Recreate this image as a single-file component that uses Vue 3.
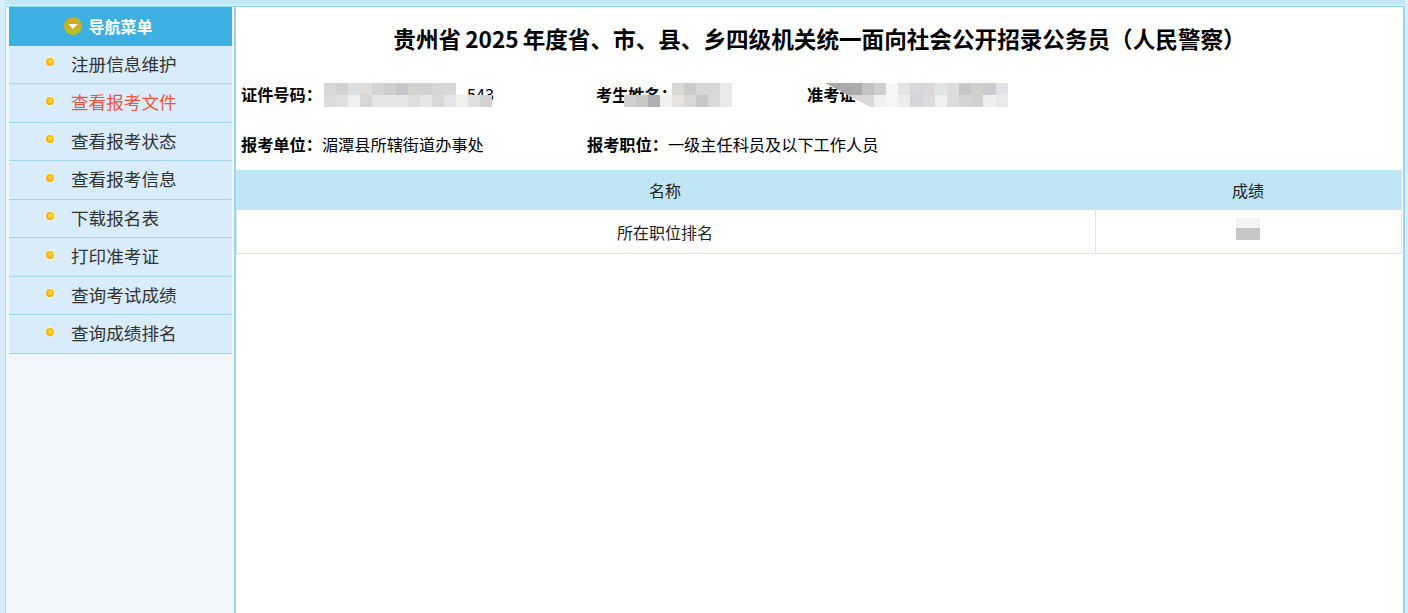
<script setup>
const menu = [
  { label: '注册信息维护' },
  { label: '查看报考文件', active: true },
  { label: '查看报考状态' },
  { label: '查看报考信息' },
  { label: '下载报名表' },
  { label: '打印准考证' },
  { label: '查询考试成绩' },
  { label: '查询成绩排名' }
]
const T = 'transparent'
const mosaics = [
  {
    left: 88, cols: 14, size: 12, cls: 'm1',
    cells: ['#d8d8d8','#d3d1d1','#dcdfe1','#e0dcd9','#d3d3d3','#cfcfd0','#c4c6c9','#d4d2cf','#d2d2d2','#d8d6d2','#d6d8dc',T,T,T,
            '#dcdcdc','#e0e0e0','#eef0ef','#d9d7d4','#e6e6e6','#e6e6e6','#e4e6e8','#e0dedb','#e8e6e4','#dad8d5','#e4e5e8','#efefec','#e0e0e0','#d2d2d2']
  },
  {
    left: 388, cols: 9, size: 12, cls: 'm2',
    cells: [T,T,T,T,'#d8d8d6','#cbcbcb','#d8d8d6','#d8d8d6','#e8e9eb',
            '#cfcfcf','#c9c6c3','#aeb0b4','#f0f0f0','#e6e2df','#d8d8d8','#c8c6ca','#d8dad8','#e8e9eb']
  },
  {
    left: 589, cols: 15, size: 12.2, cls: 'm3',
    cells: ['#a9a9a9','#a9a9a9','#acacac','#c4c4c4','#cfcfcf','#f5f6f7','#e6e2e0','#d5d8dc','#dcd8d8','#dfe4e6','#dcdcdc','#c6c6c8','#d0cfcb','#cbccd2','#e2e2e6',
            '#b8b8b8','#c8c8c8','#d8d8d8','#d8d8d8','#eef0f2','#f5f5f5','#eeecec','#d3d5d8','#dcdcde','#edf0ef','#dcdcdc','#d4d4d4','#d0d0d4','#eeeeee','#e8e8e8']
  }
]
</script>

<template>
  <div class="page">
    <div class="band"></div>
    <div class="frame">
      <aside class="side">
        <div class="side-head">
          <svg class="head-icon" width="18" height="18" viewBox="0 0 18 18">
            <defs>
              <linearGradient id="hg" x1="0" y1="0" x2="0" y2="1">
                <stop offset="0" stop-color="#d0a628" />
                <stop offset="1" stop-color="#bcc01e" />
              </linearGradient>
            </defs>
            <circle cx="9" cy="9" r="9" fill="url(#hg)" />
            <path d="M4.5 7h9L9 12z" fill="#fff" />
          </svg>
          <span>导航菜单</span>
        </div>
        <ul class="menu">
          <li v-for="item in menu" :key="item.label" class="menu-item" :class="{ active: item.active }">
            <i class="dot"></i>
            <span>{{ item.label }}</span>
          </li>
        </ul>
      </aside>
      <main class="main">
        <h1 class="title">贵州省 2025 年度省、市、县、乡四级机关统一面向社会公开招录公务员（人民警察）</h1>
        <div class="info info-a">
          <div class="field f1"><b>证件号码：</b><span class="tail">543</span></div>
          <div class="field f2"><b>考生姓名：</b></div>
          <div class="field"><b>准考证号：</b></div>
          <div
            v-for="(m, i) in mosaics"
            :key="i"
            class="mosaic"
            :class="m.cls"
            :style="{ left: m.left + 'px', gridTemplateColumns: 'repeat(' + m.cols + ', ' + m.size + 'px)' }"
          >
            <span v-for="(c, j) in m.cells" :key="j" :style="{ background: c }"></span>
          </div>
        </div>
        <div class="info info-b">
          <div class="field f3"><b>报考单位：</b>湄潭县所辖街道办事处</div>
          <div class="field"><b>报考职位：</b>一级主任科员及以下工作人员</div>
        </div>
        <div class="table">
          <div class="row head">
            <div class="c1">名称</div>
            <div class="c2">成绩</div>
          </div>
          <div class="row body">
            <div class="c1">所在职位排名</div>
            <div class="c2"><span class="score"></span></div>
          </div>
        </div>
      </main>
    </div>
  </div>
</template>

<style>
html, body { margin: 0; background: #d9eefc; overflow: hidden; }
</style>

<style scoped>
.page {
  height: 613px;
  padding: 0 3px 0 5px;
  box-sizing: border-box;
  display: flex;
  flex-direction: column;
  background: #d9eefc;
  font-family: "Noto Sans CJK SC", "Liberation Sans", sans-serif;
  color: #111;
}
.band {
  height: 5px;
  flex: none;
  background: #c3e7f7;
  border-bottom: 1px solid #e6f5fc;
}
.frame {
  flex: 1;
  display: flex;
  min-height: 0;
  border-top: 1px solid #8fd3f0;
  border-left: 1px solid #a6d9f0;
}
.side {
  width: 230px;
  flex: none;
  box-sizing: border-box;
  padding: 0 2px 0 3px;
  background: #eff7fb;
  border-right: 2px solid #9dd5ee;
}
.side-head {
  height: 38.5px;
  display: flex;
  align-items: center;
  justify-content: center;
  gap: 6px;
  padding-right: 24px;
  background: #3eafe2;
  color: #fff;
  font-size: 16px;
  font-weight: 700;
  line-height: 1;
}
.head-icon { flex: none; }
.menu {
  list-style: none;
  margin: 0;
  padding: 0;
}
.menu-item {
  height: 38.5px;
  box-sizing: border-box;
  display: flex;
  align-items: center;
  padding: 0 0 1px 37px;
  gap: 17px;
  background: #d8ecfb;
  border-bottom: 1px solid #a3d6ee;
  color: #333;
  font-size: 17.6px;
  line-height: 1;
}
.menu-item.active { color: #f2533b; }
.dot {
  width: 8px;
  height: 8px;
  flex: none;
  border-radius: 50%;
  margin-top: -3px;
  background: radial-gradient(circle at 55% 45%, #ffe24a 0, #fdb90c 50%, #e08c00 100%);
  box-shadow: 0 0 1px 1px #fff6e0;
}
.main {
  flex: 1;
  min-width: 0;
  background: #fff;
  border-right: 2px solid #9dd5ee;
}
.title {
  margin: 0;
  height: 62px;
  line-height: 64px;
  text-align: center;
  font-size: 22.6px;
  font-weight: 700;
  word-spacing: -1px;
  color: #000;
  white-space: nowrap;
}
.info {
  display: flex;
  padding-left: 5px;
  font-size: 16.2px;
  color: #000;
  white-space: nowrap;
}
.info b { font-weight: 700; }
.info-a {
  position: relative;
  height: 50px;
  line-height: 50px;
}
.info-b {
  height: 51px;
  line-height: 50px;
}
.f1 { width: 355px; }
.f2 { width: 211px; }
.f3 { width: 346px; }
.tail { margin-left: 145px; }
.mosaic {
  position: absolute;
  top: 14px;
  display: grid;
  grid-auto-rows: 12px;
}
.m3 { clip-path: polygon(0 0, 100% 0, 100% 100%, 45px 100%); }
.table {
  margin-right: 1px;
  font-size: 16px;
  color: #222;
}
.row { display: flex; text-align: center; }
.c1 { flex: 1; padding-right: 2px; }
.c2 { width: 306px; flex: none; box-sizing: border-box; padding-right: 2px; }
.head {
  height: 40px;
  line-height: 41px;
  background: #c0e6f6;
}
.body {
  height: 44px;
  box-sizing: border-box;
  line-height: 45px;
  border: 1px solid #d6e6f0;
  border-top: 0;
}
.body .c2 {
  border-left: 1px solid #d6e6f0;
  display: flex;
  justify-content: center;
}
.score {
  width: 24px;
  height: 22px;
  margin-top: 8px;
  background: linear-gradient(#f4f4f4 0 10px, #c6c6c6 10px);
}
</style>
